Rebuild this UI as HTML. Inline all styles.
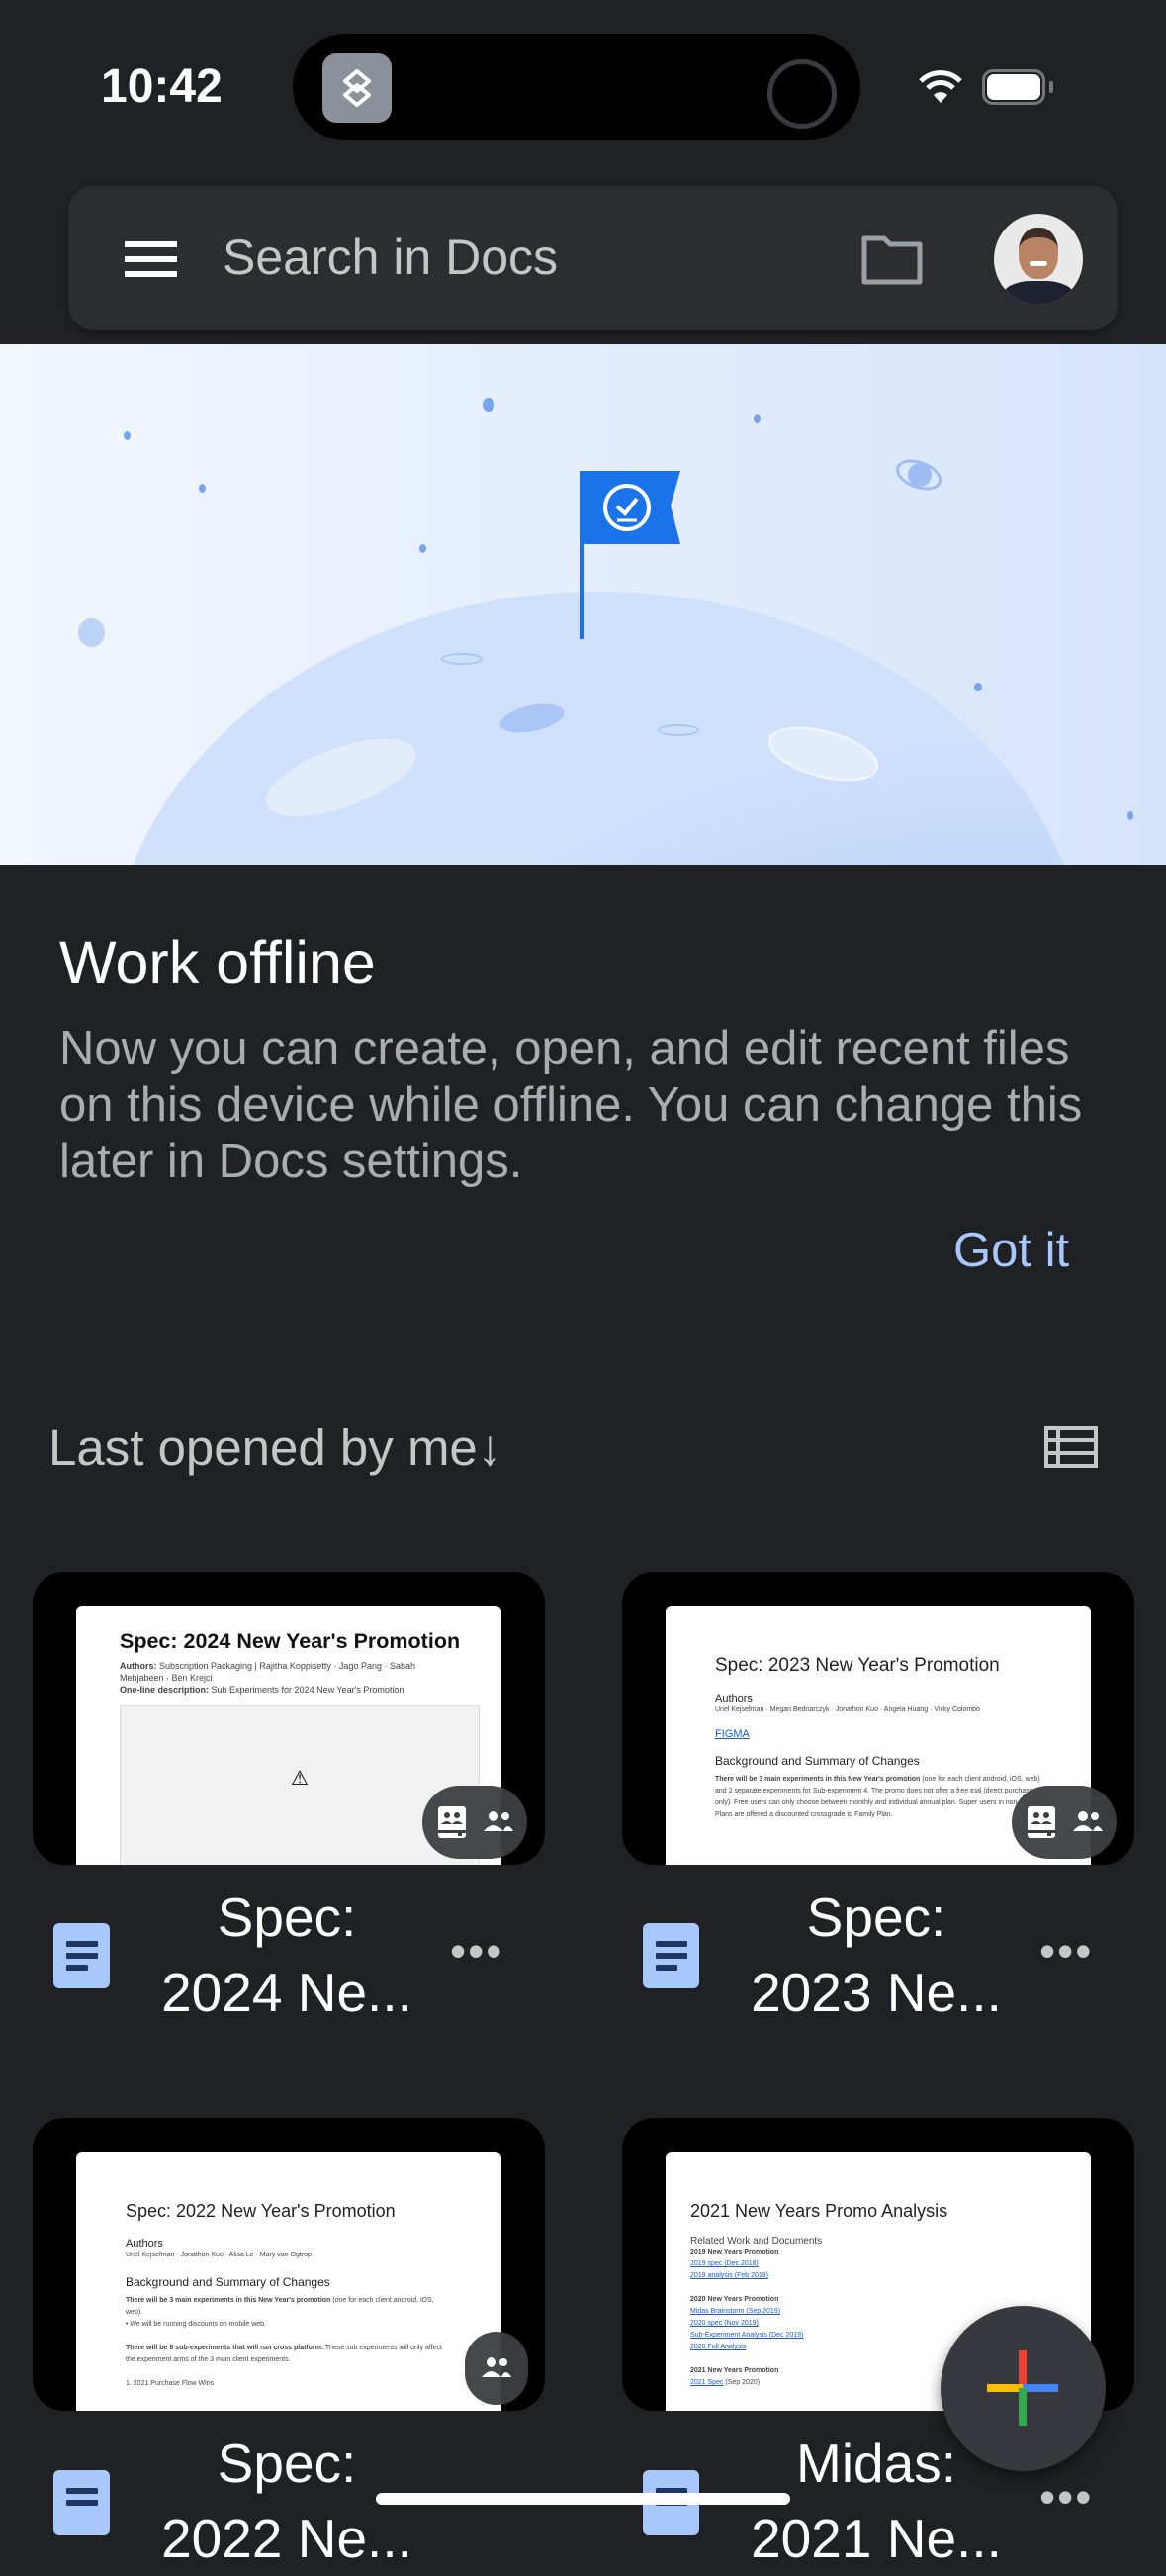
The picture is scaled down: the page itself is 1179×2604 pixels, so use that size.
<!DOCTYPE html>
<html><head><meta charset="utf-8"><style>
*{margin:0;padding:0;box-sizing:border-box}
body{width:1179px;height:2556px;background:#202124;font-family:"Liberation Sans",sans-serif;position:relative;overflow:hidden;color:#fff}
.abs{position:absolute}
.card{position:absolute;width:518px;height:296px;background:#000;border-radius:32px;overflow:hidden}
.prev{position:absolute;left:44px;top:34px;width:430px;height:300px;background:#fff;border-radius:6px 6px 0 0;color:#222;overflow:hidden}
.pill{position:absolute;height:74px;background:rgba(60,62,66,.95);border-radius:37px}
.title{position:absolute;width:300px;text-align:center;font-size:55px;line-height:76px;color:#fff}
.dicon{position:absolute;width:57px;height:66px;background:#a8c7fa;border-radius:6px}
.dicon i{position:absolute;left:13px;height:6px;background:#1f3760;border-radius:1px}
.dots{position:absolute;font-size:46px;letter-spacing:2px;color:#c4c7c5}
.small{font-size:9px;line-height:12px;color:#444}
.link{color:#1a57d6;text-decoration:underline}
</style></head><body>

<!-- status bar -->
<div class="abs" style="left:102px;top:60px;font-size:48px;font-weight:bold">10:42</div>
<div class="abs" style="left:296px;top:34px;width:574px;height:108px;background:#000;border-radius:54px"></div>
<div class="abs" style="left:326px;top:54px;width:70px;height:70px;border-radius:14px;background:#8a9198"></div>
<svg class="abs" style="left:336px;top:64px" width="50" height="50" viewBox="0 0 50 50"><path d="M25 8 L37 18 L25 28 L13 18Z M25 22 L37 32 L25 42 L13 32Z" fill="none" stroke="#fff" stroke-width="4" stroke-linejoin="round"/></svg>
<div class="abs" style="left:776px;top:60px;width:70px;height:70px;border-radius:50%;border:5px solid #3a3b3e"></div>
<svg class="abs" style="left:928px;top:70px" width="46" height="36" viewBox="0 0 46 36"><path d="M3 12 A28 28 0 0 1 43 12" stroke="#fff" stroke-width="5" fill="none"/><path d="M10 19 A18 18 0 0 1 36 19" stroke="#fff" stroke-width="5" fill="none"/><path d="M23 34 L16 26 A10 10 0 0 1 30 26Z" fill="#fff"/></svg>
<div class="abs" style="left:993px;top:70px;width:64px;height:36px;border:3px solid #777;border-radius:11px"></div>
<div class="abs" style="left:998px;top:75px;width:54px;height:26px;background:#fff;border-radius:7px"></div>
<div class="abs" style="left:1061px;top:82px;width:4px;height:12px;background:#777;border-radius:2px"></div>

<!-- search bar -->
<div class="abs" style="left:69px;top:188px;width:1061px;height:146px;background:#2c2d31;border-radius:26px;box-shadow:0 3px 6px rgba(0,0,0,.35)"></div>
<div class="abs" style="left:126px;top:244px;width:53px;height:6px;background:#fff"></div>
<div class="abs" style="left:126px;top:259px;width:53px;height:6px;background:#fff"></div>
<div class="abs" style="left:126px;top:274px;width:53px;height:6px;background:#fff"></div>
<div class="abs" style="left:225px;top:231px;font-size:50px;color:#c4c7c5">Search in Docs</div>
<svg class="abs" style="left:870px;top:235px" width="64" height="54" viewBox="0 0 64 54"><path d="M4 6 H24 L30 12 H60 V50 H4Z" fill="none" stroke="#9aa0a6" stroke-width="5" stroke-linejoin="round"/></svg>
<div class="abs" style="left:1005px;top:216px;width:90px;height:92px;border-radius:50%;background:#e9e9e9;overflow:hidden">
 <div class="abs" style="left:25px;top:14px;width:40px;height:52px;border-radius:45%;background:#b98466;border-top:10px solid #3b2c25"></div>
 <div class="abs" style="left:36px;top:48px;width:18px;height:5px;background:#fff;border-radius:3px"></div>
 <div class="abs" style="left:8px;top:68px;width:74px;height:40px;border-radius:40% 40% 0 0;background:#1e2230"></div>
</div>

<!-- banner -->
<div class="abs" style="left:0;top:348px;width:1179px;height:526px;background:linear-gradient(90deg,#f2f6fd,#d6e4fb);overflow:hidden">
 <div class="abs" style="left:110px;top:250px;width:990px;height:800px;border-radius:50%;background:radial-gradient(ellipse at 90% 80%,#a6c4f6,#cfe0fb 55%)"></div>
 <div class="abs" style="left:265px;top:408px;width:160px;height:60px;border-radius:50%;background:#e3ecfb;transform:rotate(-20deg)"></div>
 <div class="abs" style="left:775px;top:390px;width:115px;height:48px;border-radius:50%;background:#e3ecfb;border:3px solid #eef3fd;transform:rotate(15deg)"></div>
 <div class="abs" style="left:505px;top:365px;width:66px;height:26px;border-radius:50%;background:#a9c6f6;transform:rotate(-12deg)"></div>
 <div class="abs" style="left:446px;top:312px;width:42px;height:12px;border-radius:50%;border:2px solid #a9c6f6"></div>
 <div class="abs" style="left:665px;top:384px;width:42px;height:12px;border-radius:50%;border:2px solid #a9c6f6"></div>
 <div class="abs" style="left:586px;top:128px;width:5px;height:170px;background:#1a73e8"></div>
 <svg class="abs" style="left:588px;top:128px" width="102" height="76" viewBox="0 0 102 76"><path d="M0 0 H100 L90 35 L100 74 H0Z" fill="#1a73e8"/><circle cx="46" cy="37" r="22" fill="none" stroke="#fff" stroke-width="4"/><path d="M36 36 L44 43 L56 28" stroke="#fff" stroke-width="4" fill="none"/><path d="M36 50 H56" stroke="#fff" stroke-width="3"/></svg>
 <div class="abs" style="left:79px;top:277px;width:27px;height:29px;border-radius:50%;background:#bcd2f6"></div>
 <div class="abs" style="left:488px;top:54px;width:12px;height:14px;border-radius:50%;background:#78a4ef"></div>
 <div class="abs" style="left:125px;top:88px;width:7px;height:9px;border-radius:50%;background:#78a4ef"></div>
 <div class="abs" style="left:201px;top:141px;width:7px;height:9px;border-radius:50%;background:#78a4ef"></div>
 <div class="abs" style="left:424px;top:202px;width:7px;height:9px;border-radius:50%;background:#78a4ef"></div>
 <div class="abs" style="left:762px;top:71px;width:7px;height:9px;border-radius:50%;background:#78a4ef"></div>
 <div class="abs" style="left:985px;top:342px;width:8px;height:9px;border-radius:50%;background:#78a4ef"></div>
 <div class="abs" style="left:905px;top:118px;width:48px;height:28px;border-radius:50%;border:3px solid #9dbdf4;transform:rotate(20deg)"></div>
 <div class="abs" style="left:918px;top:120px;width:24px;height:24px;border-radius:50%;background:#9dbdf4"></div>
 <div class="abs" style="left:1140px;top:472px;width:6px;height:9px;border-radius:50%;background:#78a4ef"></div>
</div>

<!-- work offline -->
<div class="abs" style="left:60px;top:938px;font-size:61px;color:#fff">Work offline</div>
<div class="abs" style="left:60px;top:1032px;width:1050px;font-size:49px;line-height:57px;color:#a9acb1">Now you can create, open, and edit recent files on this device while offline. You can change this later in Docs settings.</div>
<div class="abs" style="left:964px;top:1236px;font-size:49px;color:#a8c7fa">Got it</div>

<div class="abs" style="left:49px;top:1434px;font-size:51px;color:#c4c7c5">Last opened by me↓</div>
<svg class="abs" style="left:1056px;top:1442px" width="54" height="42" viewBox="0 0 54 42"><rect x="2" y="2" width="50" height="38" fill="none" stroke="#c4c7c5" stroke-width="4"/><path d="M2 14H52M2 27H52M14 2V40" stroke="#c4c7c5" stroke-width="4"/></svg>

<!-- cards row 1 -->
<div class="card" style="left:33px;top:1589px"><div class="prev" style="padding:24px 44px">
 <div style="font-size:21.5px;font-weight:bold;color:#111;white-space:nowrap">Spec: 2024 New Year's Promotion</div>
 <div class="small" style="margin-top:6px"><b>Authors:</b> Subscription Packaging | Rajitha Koppisetty · Jago Pang · Sabah Mehjabeen · Ben Krejci<br><b>One-line description:</b> Sub Experiments for 2024 New Year's Promotion</div>
 <div style="margin-top:10px;width:364px;height:180px;background:#f1f1f1;border:1px solid #ddd;text-align:center;padding-top:60px;font-size:20px;color:#000">⚠</div>
</div><div class="pill" style="left:394px;top:216px;width:106px">
 <svg class="abs" style="left:14px;top:19px" width="32" height="36" viewBox="0 0 32 36"><rect x="2" y="2" width="28" height="32" rx="3" fill="#fff"/><circle cx="11" cy="11" r="3" fill="#3c3e42"/><circle cx="21" cy="11" r="3" fill="#3c3e42"/><path d="M5 20 Q11 14 16 20 Q21 14 27 20Z" fill="#3c3e42"/><rect x="2" y="26" width="28" height="3" fill="#3c3e42"/><rect x="22" y="29" width="4" height="3" fill="#3c3e42"/></svg>
 <svg class="abs" style="left:60px;top:24px" width="34" height="24" viewBox="0 0 34 24"><circle cx="12" cy="7" r="5" fill="#fff"/><circle cx="24" cy="7" r="4" fill="#fff"/><path d="M2 22 Q12 10 22 22Z M22 22 Q26 12 32 22Z" fill="#fff"/></svg>
</div></div>
<div class="card" style="left:629px;top:1589px"><div class="prev" style="padding:50px 50px">
 <div style="font-size:19px;color:#222;white-space:nowrap">Spec: 2023 New Year's Promotion</div>
 <div style="font-size:11px;margin-top:16px">Authors</div>
 <div class="small" style="font-size:7px">Uriel Kejsefman · Megan Bednarczyk · Jonathon Kuo · Angela Huang · Vicky Colombo</div>
 <div class="small link" style="margin-top:12px;font-size:11px">FIGMA</div>
 <div style="font-size:12px;margin-top:14px">Background and Summary of Changes</div>
 <div class="small" style="font-size:7px;line-height:12px;margin-top:6px"><b>There will be 3 main experiments in this New Year's promotion</b> (one for each client android, iOS, web) and 2 separate experiments for Sub-experiment 4. The promo does not offer a free trial (direct purchase only). Free users can only choose between monthly and individual annual plan. Super users in non-Family Plans are offered a discounted crossgrade to Family Plan.</div>
</div><div class="pill" style="left:394px;top:216px;width:106px">
 <svg class="abs" style="left:14px;top:19px" width="32" height="36" viewBox="0 0 32 36"><rect x="2" y="2" width="28" height="32" rx="3" fill="#fff"/><circle cx="11" cy="11" r="3" fill="#3c3e42"/><circle cx="21" cy="11" r="3" fill="#3c3e42"/><path d="M5 20 Q11 14 16 20 Q21 14 27 20Z" fill="#3c3e42"/><rect x="2" y="26" width="28" height="3" fill="#3c3e42"/><rect x="22" y="29" width="4" height="3" fill="#3c3e42"/></svg>
 <svg class="abs" style="left:60px;top:24px" width="34" height="24" viewBox="0 0 34 24"><circle cx="12" cy="7" r="5" fill="#fff"/><circle cx="24" cy="7" r="4" fill="#fff"/><path d="M2 22 Q12 10 22 22Z M22 22 Q26 12 32 22Z" fill="#fff"/></svg>
</div></div>

<div class="dicon" style="left:54px;top:1944px"><i style="top:18px;width:32px"></i><i style="top:30px;width:32px"></i><i style="top:42px;width:22px"></i></div>
<div class="title" style="left:140px;top:1900px">Spec:<br>2024 Ne...</div>
<div class="dots" style="left:455px;top:1945px">•••</div>
<div class="dicon" style="left:650px;top:1944px"><i style="top:18px;width:32px"></i><i style="top:30px;width:32px"></i><i style="top:42px;width:22px"></i></div>
<div class="title" style="left:736px;top:1900px">Spec:<br>2023 Ne...</div>
<div class="dots" style="left:1051px;top:1945px">•••</div>

<!-- cards row 2 -->
<div class="card" style="left:33px;top:2141px"><div class="prev" style="padding:50px 50px">
 <div style="font-size:18px;color:#222;white-space:nowrap">Spec: 2022 New Year's Promotion</div>
 <div style="font-size:11px;margin-top:16px">Authors</div>
 <div class="small" style="font-size:7px">Uriel Kejsefman · Jonathon Kuo · Alisa Le · Mary van Ogtrop</div>
 <div style="font-size:12px;margin-top:14px">Background and Summary of Changes</div>
 <div class="small" style="font-size:7px;line-height:12px;margin-top:6px"><b>There will be 3 main experiments in this New Year's promotion</b> (one for each client android, iOS, web).<br>• We will be running discounts on mobile web.<br><br><b>There will be 8 sub-experiments that will run cross platform.</b> These sub experiments will only affect the experiment arms of the 3 main client experiments.<br><br>1. 2021 Purchase Flow Wins</div>
</div><div class="pill" style="left:437px;top:216px;width:64px">
 <svg class="abs" style="left:15px;top:24px" width="34" height="24" viewBox="0 0 34 24"><circle cx="12" cy="7" r="5" fill="#fff"/><circle cx="24" cy="7" r="4" fill="#fff"/><path d="M2 22 Q12 10 22 22Z M22 22 Q26 12 32 22Z" fill="#fff"/></svg>
</div></div>
<div class="card" style="left:629px;top:2141px"><div class="prev" style="padding:50px 25px">
 <div style="font-size:18px;color:#222">2021 New Years Promo Analysis</div>
 <div style="font-size:10px;margin-top:14px;color:#444">Related Work and Documents</div>
 <div class="small" style="font-size:7px;line-height:12px"><b>2019 New Years Promotion</b><br><span class="link">2019 spec (Dec 2018)</span><br><span class="link">2019 analysis (Feb 2019)</span><br><br><b>2020 New Years Promotion</b><br><span class="link">Midas Brainstorm (Sep 2019)</span><br><span class="link">2020 spec (Nov 2019)</span><br><span class="link">Sub-Experiment Analysis (Dec 2019)</span><br><span class="link">2020 Full Analysis</span><br><br><b>2021 New Years Promotion</b><br><span class="link">2021 Spec</span> (Sep 2020)</div>
</div></div>

<div class="dicon" style="left:54px;top:2497px"><i style="top:18px;width:32px"></i><i style="top:30px;width:32px"></i></div>
<div class="title" style="left:140px;top:2452px">Spec:<br>2022 Ne...</div>
<div class="dicon" style="left:650px;top:2497px"><i style="top:18px;width:32px"></i><i style="top:30px;width:32px"></i></div>
<div class="title" style="left:736px;top:2452px">Midas:<br>2021 Ne...</div>
<div class="dots" style="left:1051px;top:2497px">•••</div>

<!-- FAB -->
<div class="abs" style="left:951px;top:2331px;width:167px;height:167px;border-radius:50%;background:#37393e;box-shadow:0 6px 14px rgba(0,0,0,.5)"></div>
<div class="abs" style="left:1030px;top:2376px;width:8px;height:38px;background:#ea4335"></div>
<div class="abs" style="left:1034px;top:2410px;width:36px;height:8px;background:#4285f4"></div>
<div class="abs" style="left:998px;top:2410px;width:36px;height:8px;background:#fbbc04"></div>
<div class="abs" style="left:1030px;top:2414px;width:8px;height:38px;background:#34a853"></div>

<div class="abs" style="left:380px;top:2520px;width:419px;height:12px;background:#fff;border-radius:6px"></div>
</body></html>
